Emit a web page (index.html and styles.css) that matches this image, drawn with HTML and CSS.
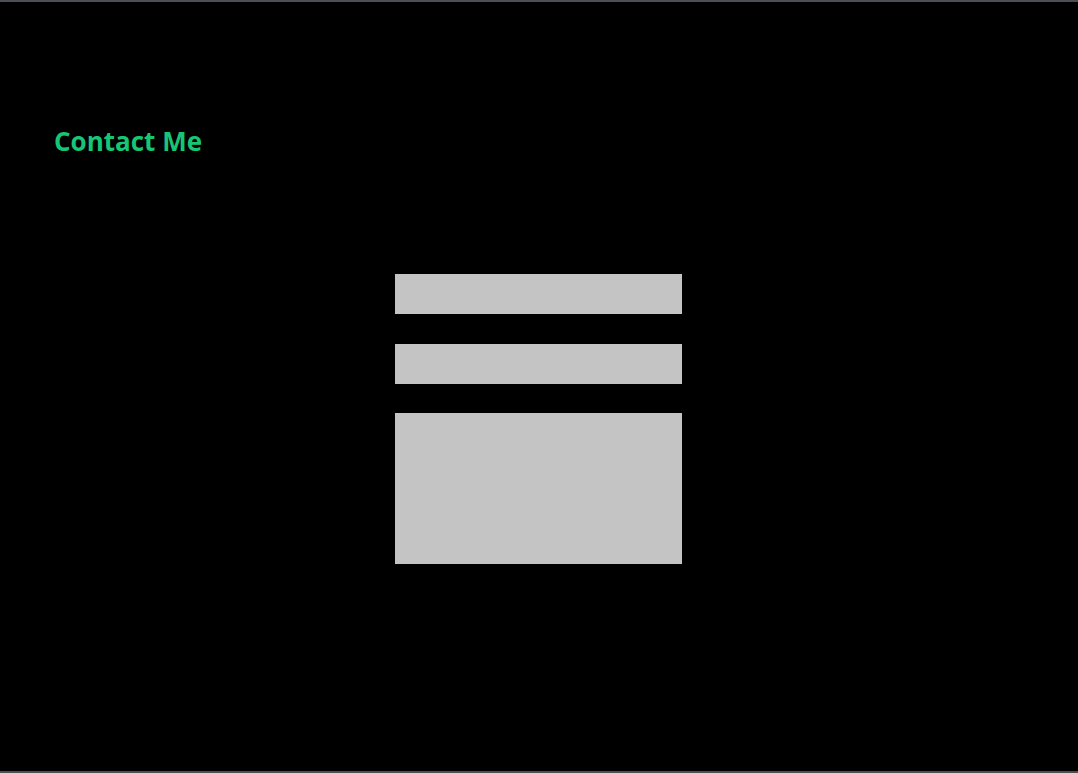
FILE: index.html
```html
<!DOCTYPE html>
<html lang="en">
<head>
<meta charset="utf-8">
<title>Contact Me</title>
<link rel="stylesheet" href="styles.css">
</head>
<body>
<main class="page">
  <h1 class="title">Contact Me</h1>
  <form class="contact-form">
    <input class="field" type="text" aria-label="Name">
    <input class="field" type="email" aria-label="Email">
    <textarea class="field field-message" aria-label="Message"></textarea>
  </form>
</main>
</body>
</html>
```

FILE: styles.css
```css
* { box-sizing: border-box; }
html, body { margin: 0; padding: 0; background: #000; }
body {
  height: 773px;
  border-top: 2px solid #4b4f53;
  border-bottom: 2px solid #4b4f53;
  font-family: "Open Sans", "DejaVu Sans", sans-serif;
}
.page {
  display: flex;
  flex-direction: column;
  padding: 119px 0 0 54px;
}
.title {
  margin: 0;
  font-size: 26px;
  line-height: 40px;
  font-weight: 700;
  color: #17c675;
}
.contact-form {
  display: flex;
  flex-direction: column;
  gap: 30px;
  width: 287px;
  margin: 113px 0 0 341px;
}
.field {
  display: block;
  width: 287px;
  height: 40px;
  border: none;
  background: #c4c4c4;
  margin: 0;
  padding: 0;
  resize: none;
  outline: none;
}
.field-message {
  height: 151px;
  margin-top: -1px;
}
```
